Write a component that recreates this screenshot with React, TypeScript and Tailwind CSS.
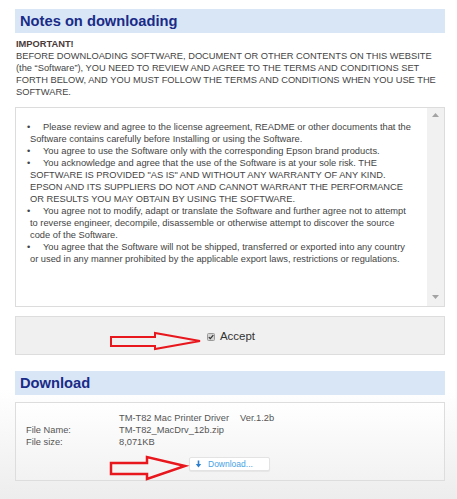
import React from "react";

const Line = ({ children, className = "" }: { children: React.ReactNode; className?: string }) => (
  <div className={"whitespace-nowrap h-[12px] leading-[12px] " + className}>{children}</div>
);

const Bullet = ({ children }: { children: React.ReactNode }) => (
  <div className="whitespace-nowrap h-[12px] leading-[12px] flex -ml-[3px]">
    <span className="w-[16px]">•</span>
    <span>{children}</span>
  </div>
);

export default function App() {
  return (
    <div className="relative w-[457px] h-[499px] overflow-hidden bg-[linear-gradient(to_bottom,#ffffff_0%,#ffffff_78%,#ededed_100%)] pl-[15px] pt-[9px] font-['Liberation_Sans',Arial,sans-serif]">
      <div className="w-[430px]">
        {/* Header 1 */}
        <div className="h-[24px] bg-[#d8e6f5] pl-[5px] flex items-center">
          <span className="text-[14.7px] font-bold text-[#1a2b88] leading-none">Notes on downloading</span>
        </div>

        {/* Important */}
        <div className="mt-[5px] pl-[1px] text-[9.3px] text-[#444]">
          <Line className="font-bold text-[#4a3a3a]">IMPORTANT!</Line>
          <Line>BEFORE DOWNLOADING SOFTWARE, DOCUMENT OR OTHER CONTENTS ON THIS WEBSITE</Line>
          <Line>(the “Software”), YOU NEED TO REVIEW AND AGREE TO THE TERMS AND CONDITIONS SET</Line>
          <Line>FORTH BELOW, AND YOU MUST FOLLOW THE TERMS AND CONDITIONS WHEN YOU USE THE</Line>
          <Line>SOFTWARE.</Line>
        </div>

        {/* License box */}
        <div className="mt-[9px] h-[200px] border border-[#dcdcdc] flex">
          <div className="flex-1 pl-[14px] pt-[13px] text-[9.3px] text-[#444]">
            <Bullet>Please review and agree to the license agreement, README or other documents that the</Bullet>
            <Line>Software contains carefully before Installing or using the Software.</Line>
            <Bullet>You agree to use the Software only with the corresponding Epson brand products.</Bullet>
            <Bullet>You acknowledge and agree that the use of the Software is at your sole risk. THE</Bullet>
            <Line>SOFTWARE IS PROVIDED "AS IS" AND WITHOUT ANY WARRANTY OF ANY KIND.</Line>
            <Line>EPSON AND ITS SUPPLIERS DO NOT AND CANNOT WARRANT THE PERFORMANCE</Line>
            <Line>OR RESULTS YOU MAY OBTAIN BY USING THE SOFTWARE.</Line>
            <Bullet>You agree not to modify, adapt or translate the Software and further agree not to attempt</Bullet>
            <Line>to reverse engineer, decompile, disassemble or otherwise attempt to discover the source</Line>
            <Line>code of the Software.</Line>
            <Bullet>You agree that the Software will not be shipped, transferred or exported into any country</Bullet>
            <Line>or used in any manner prohibited by the applicable export laws, restrictions or regulations.</Line>
          </div>
          <div className="w-[17px] bg-[#f1f1f1] flex flex-col items-center justify-between pt-[5px] pb-[7px]">
            <svg width="7" height="4" viewBox="0 0 7 4"><path d="M0 4 L3.5 0 L7 4 Z" fill="#a3a3a3" /></svg>
            <svg width="7" height="4" viewBox="0 0 7 4"><path d="M0 0 L7 0 L3.5 4 Z" fill="#a3a3a3" /></svg>
          </div>
        </div>

        {/* Accept box */}
        <div className="mt-[9px] h-[39px] border border-[#dddddd] bg-[#f0f0f0] flex items-center justify-center gap-[5px] pl-[2px] pt-[3px]">
          <svg width="8" height="8" viewBox="0 0 8 8">
            <rect x="0.5" y="0.5" width="7" height="7" rx="1" fill="#d4d4d4" stroke="#9a9a9a" />
            <path d="M1.8 4.2 L3.3 5.7 L6.3 2.2" stroke="#333" strokeWidth="1.2" fill="none" />
          </svg>
          <span className="text-[11.5px] text-[#333] leading-none">Accept</span>
        </div>

        {/* Header 2 */}
        <div className="mt-[16px] h-[24px] bg-[#d8e6f5] pl-[5px] flex items-center">
          <span className="text-[14.7px] font-bold text-[#1a2b88] leading-none">Download</span>
        </div>

        {/* Download box */}
        <div className="mt-[7px] h-[79px] border border-[#dddddd] bg-[linear-gradient(to_bottom,#ffffff,#f2f2f2)] pt-[9px] pl-[10px] text-[9.3px] text-[#555]">
          <div className="grid grid-cols-[93px_1fr]">
            <Line>&nbsp;</Line>
            <Line>
              TM-T82 Mac Printer Driver<span className="ml-[11px]">Ver.1.2b</span>
            </Line>
            <Line>File Name:</Line>
            <Line>TM-T82_MacDrv_12b.zip</Line>
            <Line>File size:</Line>
            <Line>8,071KB</Line>
          </div>
          <div className="mt-[9px] ml-[163px] w-[81px] h-[14px] bg-white border border-[#e3e3e3] rounded-[2px] shadow-[0_1px_1px_rgba(0,0,0,0.06)] flex items-center pl-[5px]">
            <svg width="7" height="8" viewBox="0 0 7 8">
              <path d="M3.5 0.5 V5" stroke="#2c7fd0" strokeWidth="1.6" />
              <path d="M0.8 4 L3.5 7.5 L6.2 4 Z" fill="#2c7fd0" />
            </svg>
            <span className="ml-[6px] text-[8.5px] text-[#45a3e6] leading-none">Download...</span>
          </div>
        </div>
      </div>

      {/* Red arrows overlay */}
      <svg className="absolute inset-0 pointer-events-none" width="457" height="499" viewBox="0 0 457 499">
        <polygon
          points="111,337 155,337 155,333 200,341 155,349 155,346 111,346"
          fill="none"
          stroke="#e8161d"
          strokeWidth="2"
          strokeLinejoin="miter"
        />
        <polygon
          points="111,463 147,463 147,457 185,466 147,479 147,474 111,474"
          fill="none"
          stroke="#e8161d"
          strokeWidth="2.5"
          strokeLinejoin="miter"
        />
      </svg>
    </div>
  );
}
